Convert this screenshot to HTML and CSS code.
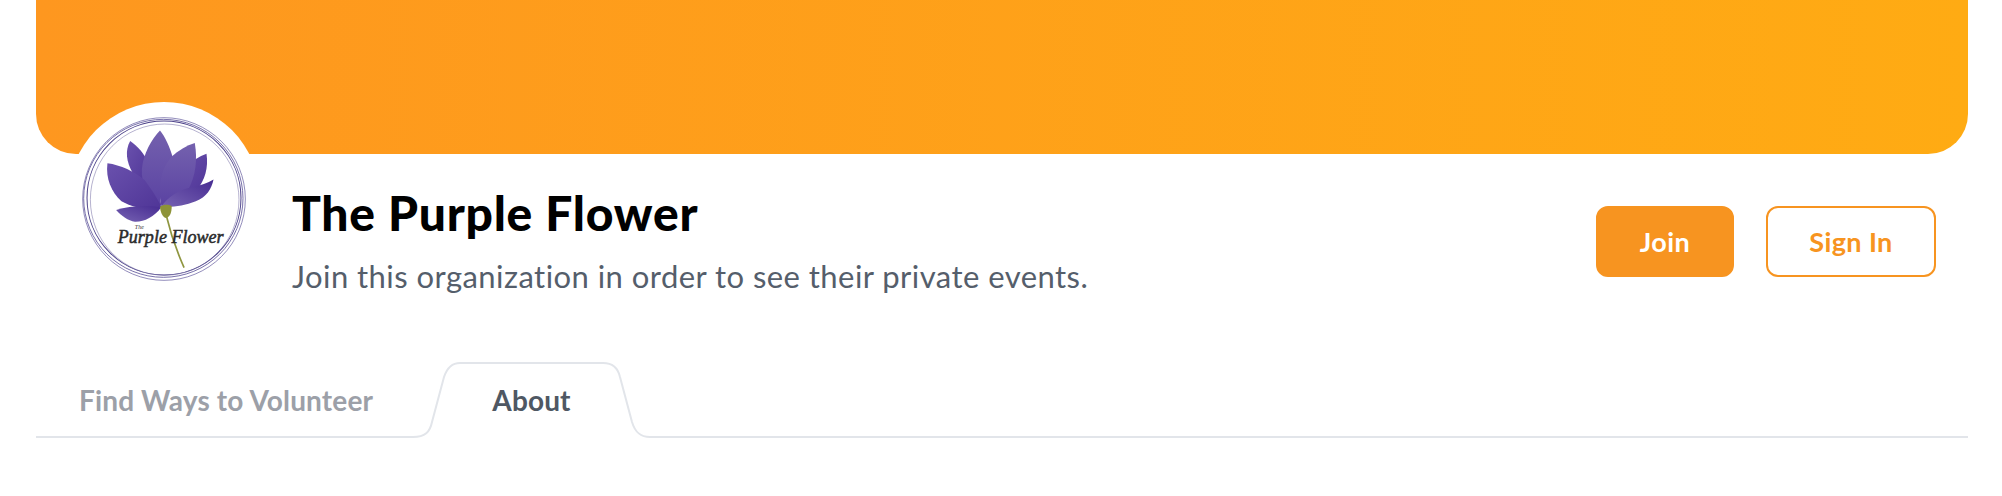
FILE: index.html
```html
<!DOCTYPE html>
<html lang="en">
<head>
    <meta charset="UTF-8">
    <title>The Purple Flower</title>
    <link rel="stylesheet" href="styles.css">
</head>
<body>
    <div class="org">
        <div class="banner"></div>

        <div class="org-head">
            <div class="avatar">
                <svg class="logo" viewBox="160 80 490 490">
                    <defs>
                        <linearGradient id="petalA" x1="0" y1="0" x2="1" y2="1">
                            <stop offset="0" stop-color="#6a51ad"/>
                            <stop offset="1" stop-color="#4f3597"/>
                        </linearGradient>
                        <linearGradient id="petalB" x1="0" y1="0" x2="0" y2="1">
                            <stop offset="0" stop-color="#7461ae"/>
                            <stop offset="1" stop-color="#5a42a2"/>
                        </linearGradient>
                        <linearGradient id="petalC" x1="0" y1="1" x2="1" y2="0">
                            <stop offset="0" stop-color="#7763b3"/>
                            <stop offset="1" stop-color="#472c92"/>
                        </linearGradient>
                    </defs>

                    <!-- rings -->
                    <g fill="none" stroke="#5d5499">
                        <circle cx="405" cy="325" r="243" stroke-width="2"/>
                        <ellipse cx="403" cy="323" rx="238" ry="236" stroke-width="2.5"/>
                        <circle cx="405" cy="322" r="230" stroke-width="3" stroke="#4b4088"/>
                        <ellipse cx="407" cy="327" rx="222" ry="226" stroke-width="1.5" stroke="#6d659f"/>
                    </g>

                    <!-- petals, back to front -->
                    <path fill="url(#petalA)" d="M532 190 C538 232 528 268 502 300 L420 320 L470 225 C490 212 510 198 532 190Z"/>
                    <path fill="url(#petalA)" d="M304 152 C325 166 347 190 362 225 L350 285 L312 248 C292 215 288 180 304 152Z"/>
                    <path fill="url(#petalB)" d="M393 120 C408 138 423 170 431 200 C400 240 388 300 397 346 C358 325 336 280 339 235 C343 190 368 145 393 120Z"/>
                    <path fill="url(#petalB)" d="M497 158 C505 205 501 255 476 300 C450 322 425 336 397 346 C385 290 395 235 428 198 C448 180 472 166 497 158Z"/>
                    <path fill="url(#petalC)" d="M553 267 C547 295 532 320 500 332 C465 347 430 350 397 348 C415 320 450 296 490 290 C515 285 535 277 553 267Z"/>
                    <path fill="url(#petalA)" d="M236 218 C275 223 317 243 347 268 C367 295 384 320 397 348 C355 362 312 350 278 332 C248 305 230 262 236 218Z"/>
                    <path fill="url(#petalC)" d="M262 358 C300 346 350 342 397 350 C375 380 345 394 318 393 C298 390 278 376 262 358Z"/>

                    <!-- stem -->
                    <path fill="none" stroke="#8f9640" stroke-width="5" d="M412 375 C425 430 445 485 465 530"/>
                    <path fill="#8d9338" d="M393 348 C405 340 420 342 428 346 C428 362 425 378 412 382 C400 380 394 362 393 348Z"/>

                    <text class="logo-the" x="318" y="414">The</text>
                    <text class="logo-name" x="425" y="456" text-anchor="middle">Purple Flower</text>
                </svg>
            </div>

            <div class="org-info">
                <h1>The Purple Flower</h1>
                <p>Join this organization in order to see their private events.</p>
            </div>

            <div class="org-actions">
                <button class="btn btn-join">Join</button>
                <button class="btn btn-signin">Sign In</button>
            </div>
        </div>

        <div class="tabs">
            <a class="tab">Find Ways to Volunteer</a>
            <a class="tab tab-active">
                <svg class="tab-shape" viewBox="0 0 237 76">
                    <path class="tab-fill" d="M0 75 C12 75 17 70 19 60 L31 15 C34 6 39 1 47 1 L190 1 C199 1 205 6 207 15 L219 60 C222 70 227 75 237 75 L237 76 L0 76Z"/>
                    <path class="tab-line" d="M0 75 C12 75 17 70 19 60 L31 15 C34 6 39 1 47 1 L190 1 C199 1 205 6 207 15 L219 60 C222 70 227 75 237 75"/>
                </svg>
                <span>About</span>
            </a>
        </div>
    </div>
</body>
</html>
```

FILE: styles.css
```css
body {
    margin: 0;
    background: #fff;
    font-family: "Lato", sans-serif;
}

.org {
    padding: 0 34px 0 36px;
}

.banner {
    height: 154px;
    border-radius: 0 0 40px 40px;
    background: linear-gradient(90deg, #fe971f, #ffab13);
}

.org-head {
    display: flex;
    align-items: flex-start;
    height: 186px;
    padding: 0 32px;
}

.avatar {
    flex: none;
    width: 192px;
    height: 192px;
    margin-top: -52px;
    border-radius: 50%;
    background: #fff;
    padding: 15px 14px 13px;
    box-sizing: border-box;
}

.logo {
    display: block;
    width: 164px;
    height: 164px;
}

.logo-the {
    font-family: "Liberation Serif", serif;
    font-style: italic;
    font-size: 18px;
    fill: #333;
}

.logo-name {
    font-family: "Liberation Serif", serif;
    font-style: italic;
    font-size: 54px;
    fill: #2b2b2b;
    stroke: #2b2b2b;
    stroke-width: 1.5;
}

.org-info {
    margin-left: 32px;
    padding-top: 31px;
}

h1 {
    margin: 0;
    font-size: 48px;
    line-height: 56px;
    font-weight: 900;
    letter-spacing: 0.75px;
    color: #000;
}

.org-info p {
    margin: 15px 0 0;
    font-size: 31px;
    line-height: 40px;
    letter-spacing: 0.45px;
    color: #555e6b;
}

.org-actions {
    display: flex;
    gap: 32px;
    margin-left: auto;
    padding-top: 52px;
}

.btn {
    height: 71px;
    border-radius: 12px;
    border: 2px solid #f79420;
    font-family: inherit;
    font-size: 27px;
    font-weight: 700;
    letter-spacing: 0.4px;
    cursor: pointer;
}

.btn-join {
    width: 138px;
    background: #f79420;
    color: #fff;
}

.btn-signin {
    width: 170px;
    background: #fff;
    color: #f79420;
}

.tabs {
    display: flex;
    box-sizing: border-box;
    height: 76px;
    margin-top: 22px;
    border-bottom: 2px solid #e2e5ea;
}

.tab {
    display: flex;
    align-items: center;
    box-sizing: border-box;
    width: 377px;
    height: 76px;
    padding-left: 43px;
    font-size: 28px;
    font-weight: 700;
    letter-spacing: 0.15px;
    color: #9ca0a8;
}

.tab-active {
    position: relative;
    justify-content: center;
    width: 237px;
    padding: 0;
    color: #4f5863;
}

.tab-shape {
    position: absolute;
    top: 0;
    left: 0;
    width: 237px;
    height: 76px;
}

.tab-fill {
    fill: #fff;
}

.tab-line {
    fill: none;
    stroke: #e2e5ea;
    stroke-width: 2;
}

.tab-active span {
    position: relative;
}
```
